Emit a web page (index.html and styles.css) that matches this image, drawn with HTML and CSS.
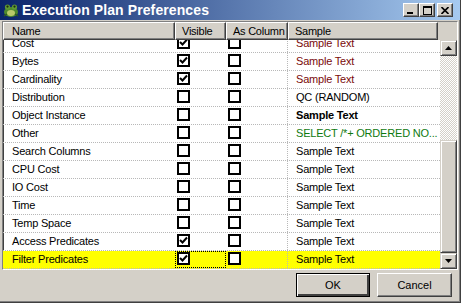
FILE: index.html
```html
<!DOCTYPE html>
<html lang="en">
<head>
  <meta charset="UTF-8">
  <title>Execution Plan Preferences</title>
  <link rel="stylesheet" href="styles.css">
</head>
<body>

  <div class="window">
    <div class="titlebar">
      <svg class="app-icon" width="16" height="16" viewBox="0 0 16 16">
        <ellipse cx="8" cy="10" rx="7" ry="5" fill="#4f8a2e"/>
        <ellipse cx="8" cy="11" rx="4" ry="3" fill="#b9c96a"/>
        <circle cx="4.5" cy="5" r="2.6" fill="#5e9a34"/>
        <circle cx="11.5" cy="5" r="2.6" fill="#5e9a34"/>
        <circle cx="4.5" cy="4.6" r="1.1" fill="#1d2a10"/>
        <circle cx="11.5" cy="4.6" r="1.1" fill="#1d2a10"/>
        <path d="M1 14 L4 12 M15 14 L12 12" stroke="#2f5a18" stroke-width="1.5"/>
      </svg>
      <span class="title">Execution Plan Preferences</span>
      <div class="caption-buttons">
        <span class="cap-btn">
          <svg width="8" height="7" viewBox="0 0 8 7"><rect x="0" y="5" width="6" height="2" fill="#000"/></svg>
        </span>
        <span class="cap-btn">
          <svg width="9" height="9" viewBox="0 0 9 9"><rect x="0.5" y="0.5" width="8" height="8" fill="none" stroke="#000"/><rect x="0" y="0" width="9" height="2" fill="#000"/></svg>
        </span>
        <span class="cap-btn close">
          <svg width="8" height="7" viewBox="0 0 8 7"><path d="M0.5 0 L7.5 7 M7.5 0 L0.5 7" stroke="#000" stroke-width="1.6"/></svg>
        </span>
      </div>
    </div>

    <div class="content">
      <div class="list">
        <div class="header">
          <div class="hcell">Name</div>
          <div class="hcell">Visible</div>
          <div class="hcell">As Column</div>
          <div class="hcell">Sample</div>
          <div class="hcell blank"></div>
        </div>
        <div class="list-body">
          <div class="viewport">
            <div class="rows" id="rows"></div>
          </div>
          <div class="scrollbar">
            <span class="sb-btn">
              <svg width="7" height="4" viewBox="0 0 7 4"><path d="M3.5 0 L7 4 L0 4 Z" fill="#000"/></svg>
            </span>
            <span class="sb-track"></span>
            <span class="sb-thumb"></span>
            <span class="sb-btn">
              <svg width="7" height="4" viewBox="0 0 7 4"><path d="M0 0 L7 0 L3.5 4 Z" fill="#000"/></svg>
            </span>
          </div>
        </div>
      </div>

      <div class="actions">
        <button class="btn default">OK</button>
        <button class="btn">Cancel</button>
      </div>
    </div>
  </div>

  <script>
    const columns = [
      { name: "Cost", visible: true, sample: "Sample Text", style: "red" },
      { name: "Bytes", visible: true, sample: "Sample Text", style: "red" },
      { name: "Cardinality", visible: true, sample: "Sample Text", style: "red" },
      { name: "Distribution", visible: false, sample: "QC (RANDOM)" },
      { name: "Object Instance", visible: false, sample: "Sample Text", style: "bold" },
      { name: "Other", visible: false, sample: "SELECT /*+ ORDERED NO...", style: "green" },
      { name: "Search Columns", visible: false, sample: "Sample Text" },
      { name: "CPU Cost", visible: false, sample: "Sample Text" },
      { name: "IO Cost", visible: false, sample: "Sample Text" },
      { name: "Time", visible: false, sample: "Sample Text" },
      { name: "Temp Space", visible: false, sample: "Sample Text" },
      { name: "Access Predicates", visible: true, sample: "Sample Text" },
      { name: "Filter Predicates", visible: true, sample: "Sample Text", selected: true }
    ];

    const check = '<svg width="9" height="9" viewBox="0 0 9 9"><path d="M1 4 L3.5 6.5 L8 1.5" fill="none" stroke="#000" stroke-width="2"/></svg>';

    function box(on) {
      return `<span class="checkbox">${on ? check : ""}</span>`;
    }

    document.getElementById("rows").innerHTML = columns.map(c => `
      <div class="row${c.selected ? " selected" : ""}">
        <div class="cell name">${c.name}</div>
        <div class="cell chk${c.selected ? " focus" : ""}">${box(c.visible)}</div>
        <div class="cell chk ascol">${box(false)}</div>
        <div class="cell sample ${c.style || ""}">${c.sample}</div>
      </div>
    `).join("");
  </script>

</body>
</html>
```

FILE: styles.css
```css
body {
  margin: 0;
  font-family: 'Liberation Sans', Arial, sans-serif;
  font-size: 11px;
  color: #000;
  background: #d4d0c8;
}
.window {
  width: 461px; height: 303px;
  box-sizing: border-box;
  background: #d4d0c8;
  display: flex; flex-direction: column;
  border-right: 1px solid #404040;
  border-bottom: 1px solid #404040;
  box-shadow: inset -1px -1px #808080;
}
.titlebar {
  height: 20px;
  display: flex; align-items: center;
  padding-left: 3px;
  background: linear-gradient(to right, #0a246a, #a6caf0);
  color: #fff;
}
.app-icon { margin-right: 3px; }
.title {
  font-weight: bold;
  font-size: 14px;
  letter-spacing: 0.1px;
  margin-top: -1px;
}
.caption-buttons {
  margin-left: auto;
  margin-right: 7px;
  display: flex;
}
.cap-btn {
  width: 16px; height: 14px;
  box-sizing: border-box;
  background: #d4d0c8;
  border: 1px solid;
  border-color: #fff #404040 #404040 #fff;
  box-shadow: inset -1px -1px #808080;
  display: flex; align-items: center; justify-content: center;
}
.cap-btn.close { margin-left: 2px; }

.content {
  flex: 1;
  display: flex; flex-direction: column;
  padding: 1px 2px 0 2px;
}
.list {
  border: 1px solid;
  border-color: #808080 #fff #fff #808080;
  box-shadow: inset 1px 1px #404040;
  background: #fff;
}
.header {
  display: grid;
  grid-template-columns: 172px 51px 62px 150px 1fr;
  height: 18px;
  background: #d4d0c8;
}
.hcell {
  box-sizing: border-box;
  padding-left: 6px;
  line-height: 16px;
  letter-spacing: -0.25px;
  border: 1px solid;
  border-color: #fff #404040 #404040 #fff;
  box-shadow: inset -1px -1px #808080;
  white-space: nowrap;
  overflow: hidden;
}
.hcell:first-child { padding-left: 8px; }
.hcell.blank { border: none; box-shadow: none; }

.list-body {
  display: flex;
  height: 229px;
}
.viewport {
  flex: 1;
  overflow: hidden;
}
.rows { margin-top: -5px; }
.row {
  display: grid;
  grid-template-columns: 172px 51px 62px 1fr;
  height: 18px;
  box-sizing: border-box;
  border-bottom: 1px dotted #b8b8b8;
}
.row.selected { background: #ffff00; }
.cell {
  line-height: 17px;
  letter-spacing: -0.2px;
  white-space: nowrap;
  overflow: hidden;
}
.cell.name { padding-left: 9px; }
.cell.chk { padding: 1px 0 0 2px; box-sizing: border-box; }
.cell.focus { outline: 1px dotted #000; outline-offset: -1px; }
.cell.ascol { border-right: 1px dotted #b8b8b8; }
.cell.sample { padding-left: 8px; }
.red { color: #7a0a0a; }
.green { color: #0f7a0f; }
.bold { font-weight: bold; }

.checkbox {
  width: 13px; height: 13px;
  box-sizing: border-box;
  border: 2px solid #000;
  background: #fff;
  display: flex; align-items: center; justify-content: center;
}

.scrollbar {
  width: 17px;
  display: flex; flex-direction: column;
}
.sb-btn {
  height: 16px;
  box-sizing: border-box;
  background: #d4d0c8;
  border: 1px solid;
  border-color: #d4d0c8 #404040 #404040 #d4d0c8;
  box-shadow: inset 1px 1px #fff, inset -1px -1px #808080;
  display: flex; align-items: center; justify-content: center;
}
.sb-track {
  height: 84px;
  background: repeating-conic-gradient(#d4d0c8 0 25%, #fff 0 50%) 0 0 / 2px 2px;
}
.sb-thumb {
  flex: 1;
  box-sizing: border-box;
  background: #d4d0c8;
  border: 1px solid;
  border-color: #d4d0c8 #404040 #404040 #d4d0c8;
  box-shadow: inset 1px 1px #fff, inset -1px -1px #808080;
}

.actions {
  display: flex;
  justify-content: flex-end;
  gap: 7px;
  padding: 3px 6px 0 0;
}
.btn {
  width: 75px; height: 24px;
  font-family: inherit;
  font-size: 11px;
  background: #d4d0c8;
  border: 1px solid;
  border-color: #fff #404040 #404040 #fff;
  box-shadow: inset -1px -1px #808080;
  padding: 0;
}
.btn.default {
  width: 74px;
  border-color: #000;
  box-shadow: inset 1px 1px #fff, inset -2px -2px #404040, inset -1px -1px #808080;
}
```
